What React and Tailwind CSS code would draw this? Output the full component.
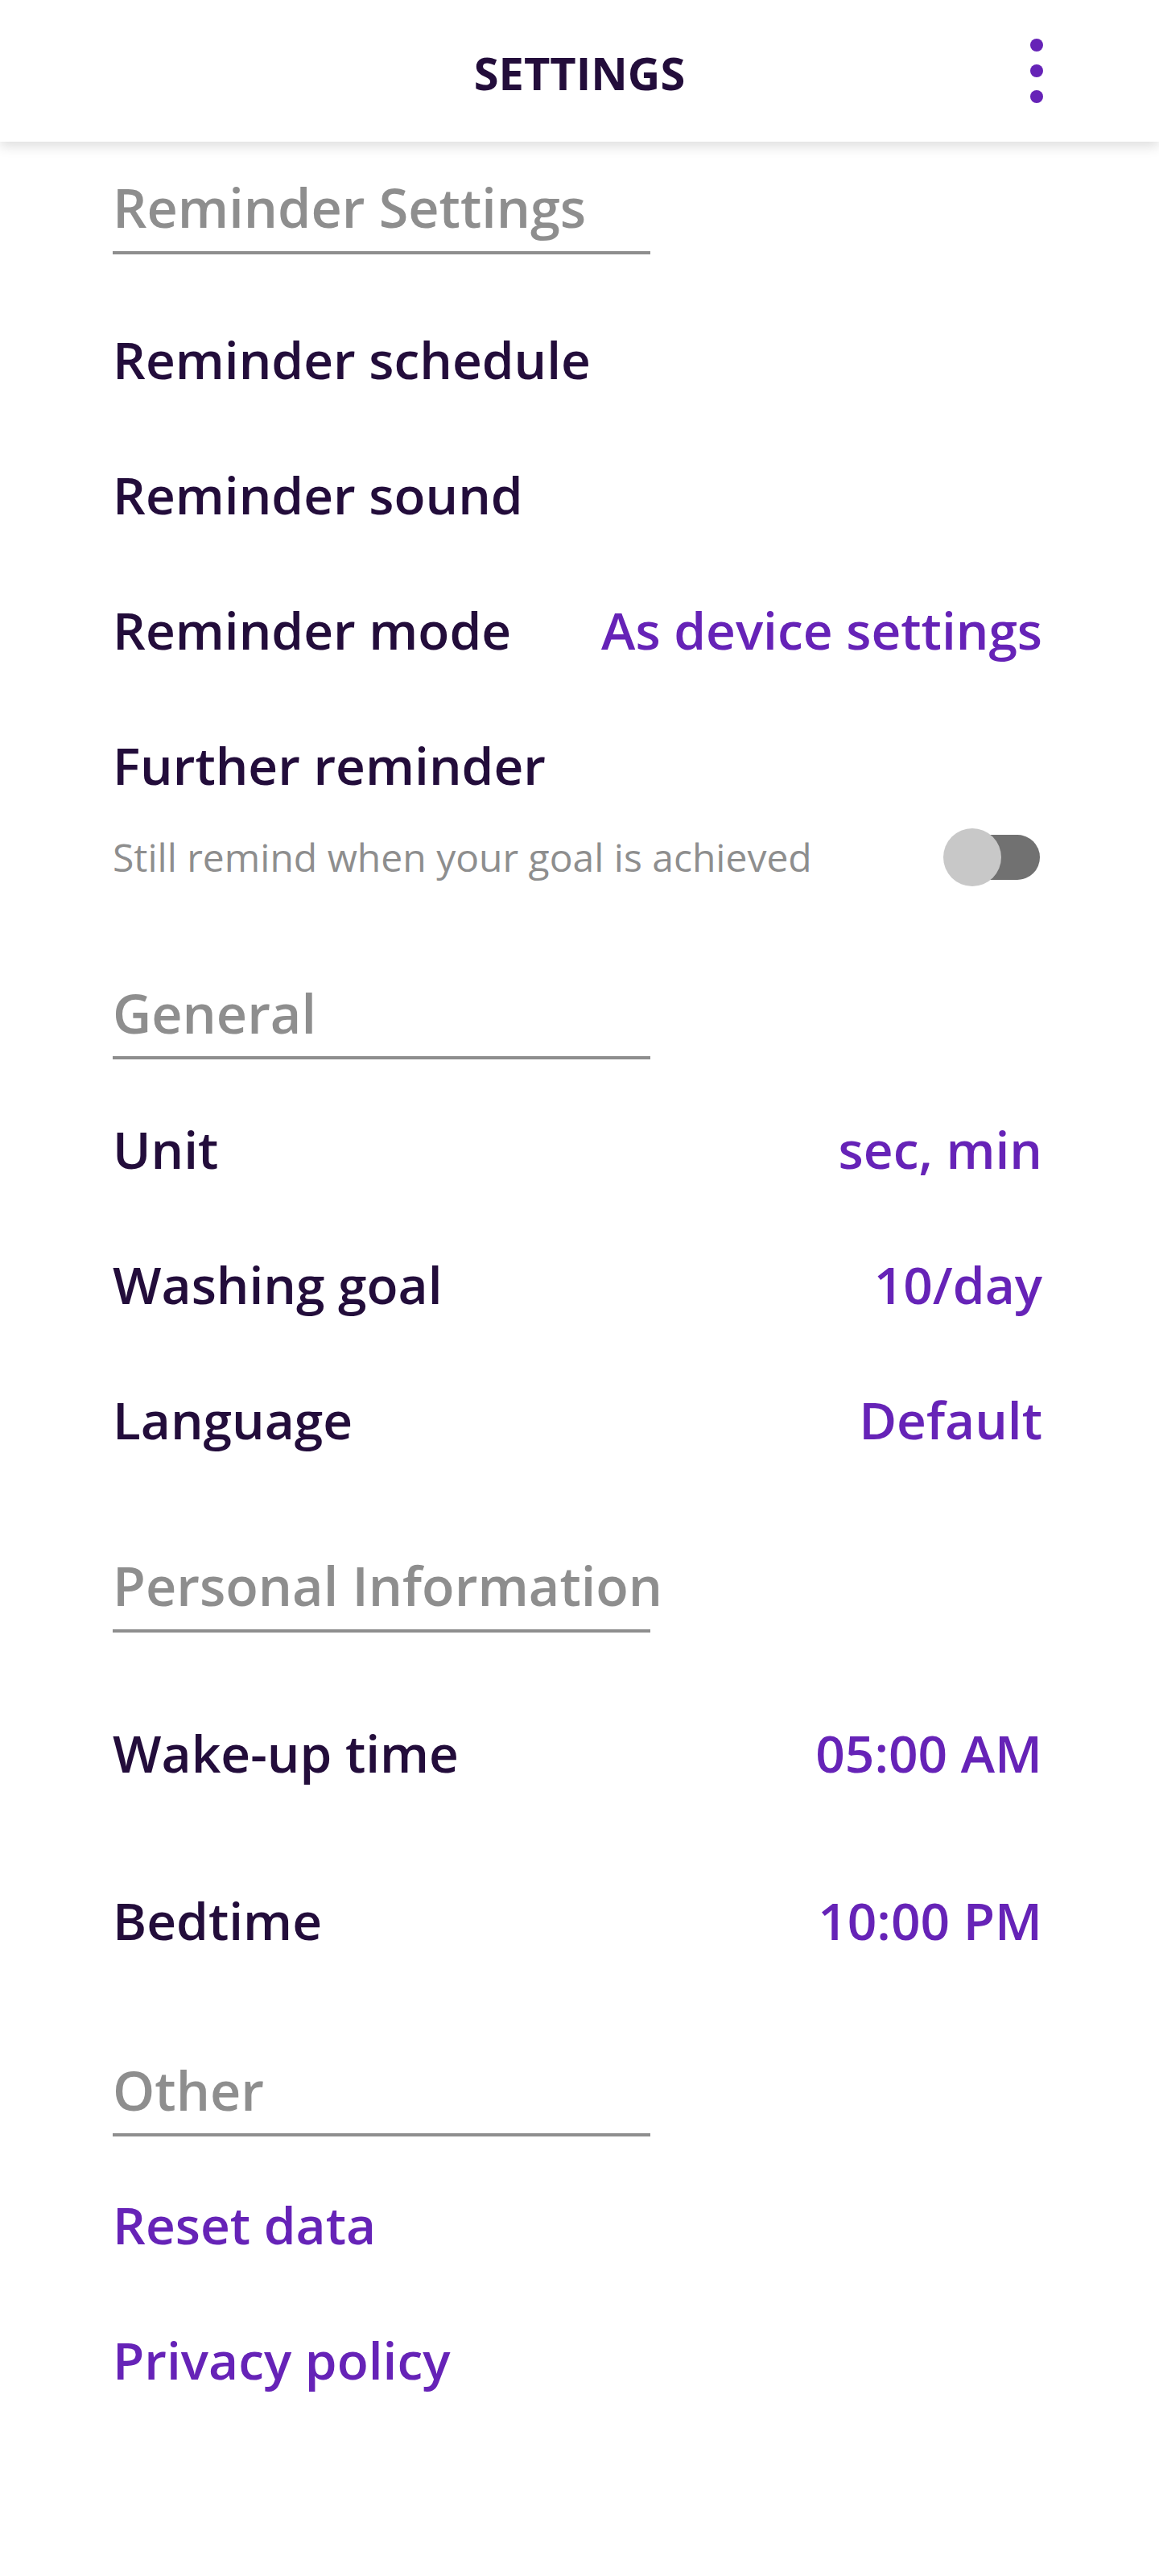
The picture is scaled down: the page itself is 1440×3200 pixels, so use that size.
import React from "react";

const font = { fontFamily: '"Open Sans", "Noto Sans", sans-serif' };

function SectionTitle({ children, mt }) {
  return (
    <div className={mt}>
      <div className="text-[66.5px] leading-none font-semibold text-[#8e8e8e] whitespace-nowrap">
        {children}
      </div>
      <div className="mt-[21px] h-[4px] w-[668px] bg-[#8e8e8e]" />
    </div>
  );
}

function Row({ label, value, h = "h-[168px]", labelClass = "text-[#230d3b]" }) {
  return (
    <div className={`flex items-center justify-between ${h}`}>
      <span className={`text-[64px] leading-none font-semibold ${labelClass}`}>{label}</span>
      {value ? (
        <span className="text-[64px] leading-none font-semibold text-[#6623b7]">{value}</span>
      ) : null}
    </div>
  );
}

export default function App() {
  return (
    <div className="w-[1440px] min-h-[3200px] bg-white" style={font}>
      <header className="relative z-10 flex h-[176px] items-center justify-center bg-white pt-[4px] shadow-[0_6px_14px_rgba(0,0,0,0.13)]">
        <h1 className="text-[56px] leading-none font-bold text-[#230d3b]">SETTINGS</h1>
        <div className="absolute left-[1280px] top-[48px] flex flex-col gap-[16px]">
          <span className="block h-[16px] w-[16px] rounded-full bg-[#6623b7]" />
          <span className="block h-[16px] w-[16px] rounded-full bg-[#6623b7]" />
          <span className="block h-[16px] w-[16px] rounded-full bg-[#6623b7]" />
        </div>
      </header>

      <main className="pl-[140px] pr-[145px]">
        <SectionTitle mt="pt-[48px]">Reminder Settings</SectionTitle>
        <div className="mt-[47px]">
          <Row label="Reminder schedule" />
          <Row label="Reminder sound" />
          <Row label="Reminder mode" value="As device settings" />
          <Row label="Further reminder" />
          <div className="flex h-[60px] items-center justify-between">
            <span className="text-[48px] leading-none text-[#8e8e8e]">
              Still remind when your goal is achieved
            </span>
            <div className="relative mr-[3px] h-[56px] w-[120px]">
              <div className="absolute left-[8px] right-0 top-0 h-[56px] rounded-full bg-[#717171]" />
              <div className="absolute left-0 top-[-8px] h-[72px] w-[72px] rounded-full bg-[#c8c8c8]" />
            </div>
          </div>
        </div>

        <SectionTitle mt="mt-[130px]">General</SectionTitle>
        <div className="mt-[28px]">
          <Row label="Unit" value="sec, min" />
          <Row label="Washing goal" value="10/day" />
          <Row label="Language" value="Default" />
        </div>

        <SectionTitle mt="mt-[88px]">Personal Information</SectionTitle>
        <div className="mt-[46px]">
          <Row label="Wake-up time" value="05:00 AM" h="h-[208px]" />
          <Row label="Bedtime" value="10:00 PM" h="h-[209px]" />
        </div>

        <SectionTitle mt="mt-[72px]">Other</SectionTitle>
        <div className="mt-[26px]">
          <Row label="Reset data" labelClass="text-[#6623b7]" />
          <Row label="Privacy policy" labelClass="text-[#6623b7]" />
        </div>
      </main>
    </div>
  );
}
